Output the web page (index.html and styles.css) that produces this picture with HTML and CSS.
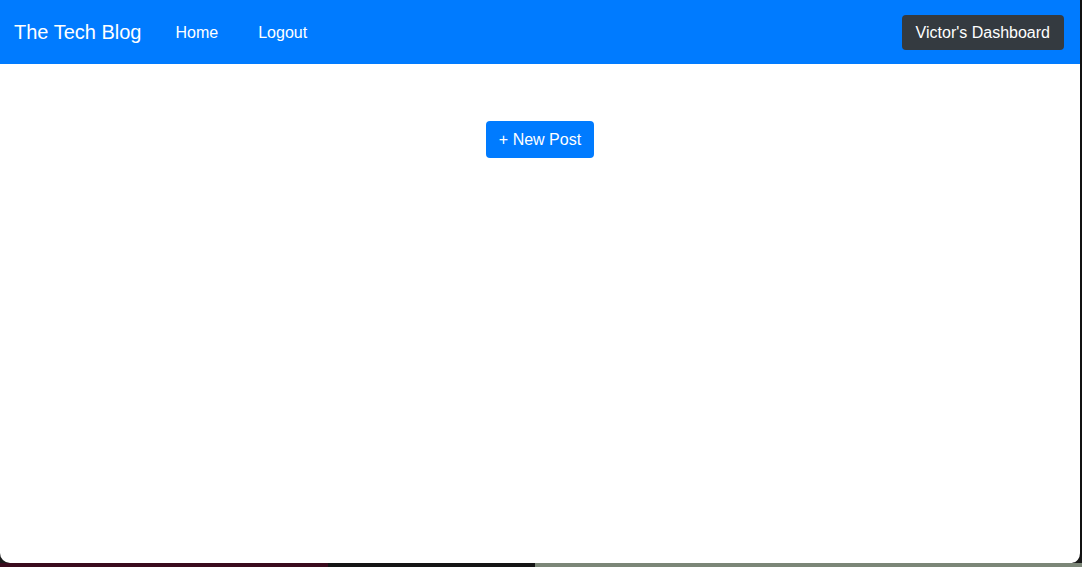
FILE: index.html
```html
<!DOCTYPE html>
<html lang="en">
<head>
<meta charset="utf-8">
<title>The Tech Blog</title>
<link rel="stylesheet" href="styles.css">
</head>
<body>
<div class="screen">
  <div class="window">
    <nav class="navbar">
      <a class="brand" href="#">The Tech Blog</a>
      <ul class="nav-links">
        <li><a href="#">Home</a></li>
        <li><a href="#">Logout</a></li>
      </ul>
      <a class="btn btn-dark" href="#">Victor's Dashboard</a>
    </nav>
    <main class="content">
      <a class="btn btn-primary" href="#">+ New Post</a>
    </main>
  </div>
  <div class="desktop">
    <span class="seg seg-maroon"></span>
    <span class="seg seg-black"></span>
    <span class="seg seg-grey"></span>
  </div>
</div>
</body>
</html>
```

FILE: styles.css
```css
* { box-sizing: border-box; }
html, body { margin: 0; padding: 0; height: 100%; }
body {
  font-family: "Liberation Sans", Arial, sans-serif;
  background: #1a1a1a;
  overflow: hidden;
}
.screen {
  display: flex;
  flex-direction: column;
  height: 567px;
}
.window {
  height: 563px;
  background: #ffffff;
  border-right: 2px solid #111;
  border-radius: 0 0 10px 10px;
  overflow: hidden;
  position: relative;
  z-index: 1;
}
.navbar {
  height: 64px;
  background: #007bff;
  display: flex;
  align-items: center;
  padding: 1px 16px 0 14px;
}
.brand {
  color: #fff;
  text-decoration: none;
  font-size: 20px;
  margin-right: 34px;
}
.nav-links {
  list-style: none;
  margin: 0;
  padding: 0;
  display: flex;
  gap: 40px;
  flex: 1;
}
.nav-links a {
  color: #fff;
  text-decoration: none;
  font-size: 16px;
}
.btn {
  display: inline-flex;
  align-items: center;
  justify-content: center;
  color: #fff;
  text-decoration: none;
  font-size: 16px;
  border-radius: 4px;
  padding: 1px 12px 0;
}
.btn-dark {
  background: #343a40;
  height: 35px;
  padding: 1px 14px 0;
  margin-top: -1px;
}
.btn-primary {
  background: #007bff;
  height: 37px;
  padding: 1px 13px 0;
}
.content {
  display: flex;
  justify-content: center;
  padding-top: 57px;
}
.desktop {
  display: flex;
  height: 4px;
}
.seg { display: block; height: 100%; }
.seg-maroon { width: 328px; background: #3a0b1d; }
.seg-black { width: 207px; background: #151515; }
.seg-grey { flex: 1; background: #7b8677; }
```
